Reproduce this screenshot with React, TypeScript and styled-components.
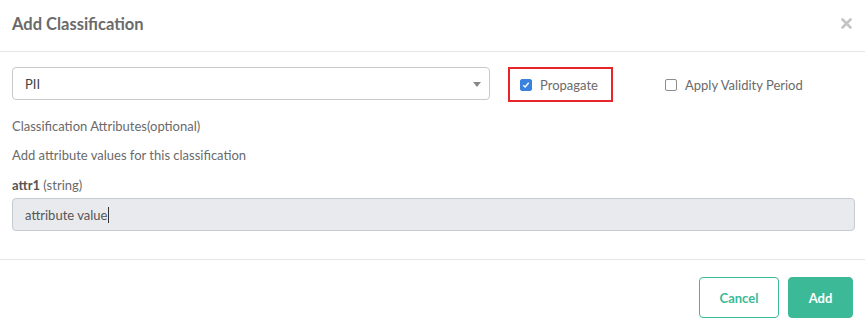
import React from "react";
import styled, { createGlobalStyle } from "styled-components";

const Global = createGlobalStyle`
  html, body { margin: 0; padding: 0; background: #fff; }
  body { font-family: Lato, "Open Sans", sans-serif; color: #686868; }
  * { box-sizing: border-box; }
`;

const Modal = styled.div`
  width: 865px;
  height: 329px;
  background: #fff;
  display: flex;
  flex-direction: column;
`;

const Header = styled.div`
  height: 52px;
  border-bottom: 1px solid #e6e6e6;
  display: flex;
  align-items: center;
  justify-content: space-between;
  padding: 0 12px 4px 12px;
`;

const Title = styled.h4`
  margin: 0;
  font-size: 16.5px;
  font-weight: 700;
  color: #6a6a6a;
`;

const Close = styled.button`
  border: none;
  background: none;
  padding: 0;
  width: 14px;
  height: 14px;
  display: flex;
  align-items: center;
  justify-content: center;
  cursor: pointer;
`;

const Body = styled.div`
  padding: 15px 10px 0 12px;
  height: 208px;
  border-bottom: 1px solid #e6e6e6;
`;

const TopRow = styled.div`
  display: flex;
  align-items: flex-start;
  height: 36px;
`;

const Select = styled.div`
  width: 478px;
  height: 33px;
  border: 1px solid #c9c9c9;
  border-radius: 4px;
  display: flex;
  align-items: center;
  justify-content: space-between;
  padding: 0 8px 0 12px;
  font-size: 13px;
  color: #444;
`;

const Caret = styled.span`
  width: 0;
  height: 0;
  border-left: 4px solid transparent;
  border-right: 4px solid transparent;
  border-top: 5px solid #888;
  margin-top: 2px;
`;

const Highlight = styled.div`
  margin-left: 18px;
  width: 105px;
  height: 35px;
  border: 2px solid #e8262a;
  display: flex;
  align-items: center;
  padding-left: 10px;
`;

const CheckLabel = styled.label<{ $offset?: number }>`
  display: flex;
  align-items: center;
  gap: 8px;
  height: 35px;
  font-size: 13px;
  color: #6a6a6a;
  margin-left: ${(p) => p.$offset ?? 0}px;
`;

const Box = styled.span<{ $checked?: boolean }>`
  width: 12px;
  height: 12px;
  border-radius: 2px;
  display: flex;
  align-items: center;
  justify-content: center;
  background: ${(p) => (p.$checked ? "#3a82e0" : "#fff")};
  border: 1px solid ${(p) => (p.$checked ? "#3a82e0" : "#8d8d8d")};
`;

const Text = styled.div<{ $mt: number }>`
  margin-top: ${(p) => p.$mt}px;
  font-size: 13px;
  line-height: 16px;
  color: #6a6a6a;
`;

const Strong = styled.b`
  font-weight: 700;
  color: #555;
`;

const Input = styled.div`
  margin-top: 5px;
  width: 843px;
  height: 33px;
  background: #e9eaee;
  border: 1px solid #c6cbd3;
  border-radius: 4px;
  display: flex;
  align-items: center;
  padding-left: 12px;
  font-size: 13px;
  color: #555;
`;

const Cursor = styled.span`
  display: inline-block;
  width: 1px;
  height: 16px;
  background: #333;
  margin-left: 1px;
`;

const Footer = styled.div`
  flex: 1;
  display: flex;
  justify-content: flex-end;
  align-items: flex-start;
  gap: 9px;
  padding: 17px 12px 0 0;
`;

const Button = styled.button<{ $primary?: boolean }>`
  height: 41px;
  padding: 0;
  border-radius: 4px;
  font-family: Lato, "Open Sans", sans-serif;
  font-size: 13px;
  font-weight: 700;
  cursor: pointer;
  border: 1px solid #3cba97;
  background: ${(p) => (p.$primary ? "#3cba97" : "#fff")};
  color: ${(p) => (p.$primary ? "#fff" : "#3cba97")};
  width: ${(p) => (p.$primary ? 65 : 80)}px;
`;

export default function App() {
  return (
    <>
      <Global />
      <Modal>
        <Header>
          <Title>Add Classification</Title>
          <Close aria-label="close">
            <svg width="11" height="11" viewBox="0 0 11 11">
              <path d="M1.5 1.5 L9.5 9.5 M9.5 1.5 L1.5 9.5" stroke="#c4c4c4" strokeWidth="2.6" strokeLinecap="round" />
            </svg>
          </Close>
        </Header>
        <Body>
          <TopRow>
            <Select>
              <span>PII</span>
              <Caret />
            </Select>
            <Highlight>
              <CheckLabel>
                <Box $checked>
                  <svg width="8" height="8" viewBox="0 0 8 8">
                    <path d="M1.3 4.2 L3.2 6 L6.7 1.8" stroke="#fff" strokeWidth="1.4" fill="none" />
                  </svg>
                </Box>
                Propagate
              </CheckLabel>
            </Highlight>
            <CheckLabel $offset={52}>
              <Box />
              Apply Validity Period
            </CheckLabel>
          </TopRow>
          <Text $mt={15}>Classification Attributes(optional)</Text>
          <Text $mt={13}>Add attribute values for this classification</Text>
          <Text $mt={14}>
            <Strong>attr1</Strong> (string)
          </Text>
          <Input>
            attribute value
            <Cursor />
          </Input>
        </Body>
        <Footer>
          <Button>Cancel</Button>
          <Button $primary>Add</Button>
        </Footer>
      </Modal>
    </>
  );
}
